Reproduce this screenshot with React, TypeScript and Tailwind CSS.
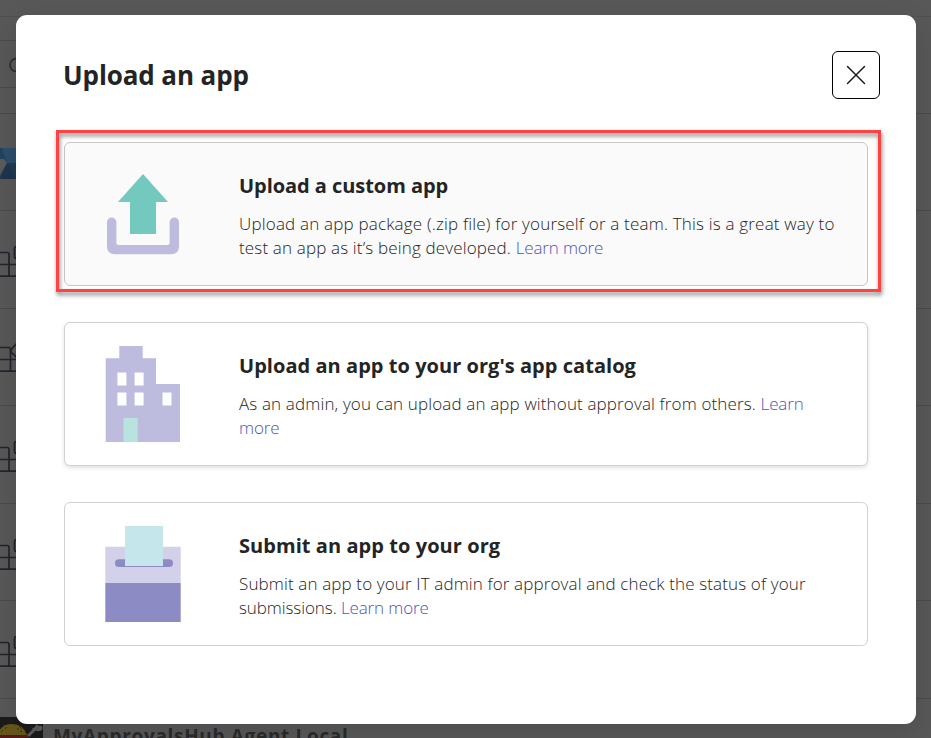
import React from "react";

const font = "font-['Open_Sans','Noto_Sans',sans-serif]";

function AppGlyph({ variant }: { variant: "square" | "diamond" }) {
  const x = variant === "square" ? 9 : 10.5;
  return (
    <svg width="16" height="97" viewBox="0 1 16 97" fill="none" stroke="#23232b" strokeWidth="1.7" className="block">
      <path d={`M0 42.500H${x - 2}Q${x} 42.500 ${x} 44.500V66M0 54.500H16M0 66.200H16`} />
      {variant === "square" ? (
        <path d="M18 36.500H16.500Q14.500 36.500 14.500 38.500V46Q14.500 48.500 16.500 48.500H18" />
      ) : (
        <path d="M18 37L11 44.500Q10.500 46 11.500 47.500L18 53.500" />
      )}
    </svg>
  );
}

function BlueLogo() {
  return (
    <svg width="16" height="97" viewBox="0 1 16 97" className="block">
      <path d="M0 35H16V66H0Z" fill="#24435d" />
      <path d="M2 35H16V50H7Z" fill="#2c4f6c" />
      <path d="M7 50L16 66H0Z" fill="#1d354b" />
      <path d="M7 50H16V66Z" fill="#203b53" />
      <path d="M0 46H4L7 50L0 62Z" fill="#5b5b5b" />
    </svg>
  );
}

function BowlLogo() {
  return (
    <svg width="43" height="21" viewBox="0 0 43 21" className="block shrink-0">
      <path d="M0 0H43V21H0Z" fill="#1b1b1c" />
      <path d="M-3 18Q1 7 12 7Q23 7 27 18Z" fill="#66581a" />
      <path d="M1 15L3 13M5 12L7 10M17 11L19 13M19 9L22 12M20 15L22 14" stroke="#39320f" />
      <path d="M0 18H28V21H0Z" fill="#59191c" />
      <path d="M28 19L36 11" stroke="#5c5c5c" strokeWidth="3" />
      <path d="M31 10Q35 13 36 7L40 10L42 12Q40 16 34 13Z" fill="#5c5c5c" />
      <circle cx="40" cy="11" r="2.500" fill="#5c5c5c" />
    </svg>
  );
}

function Backdrop() {
  return (
    <div className="flex h-full flex-col bg-[#585858]">
      <div className="h-[16px] shrink-0" />
      <div className="h-[24px] shrink-0 border-t border-[#505050]" />
      <div className="flex h-[47px] w-4 shrink-0 items-center border-t border-[#4b4b4b] pl-[9px]">
        <svg width="14" height="16" viewBox="0 0 14 16" fill="none" stroke="#303030" strokeWidth="1.800" className="shrink-0">
          <circle cx="7.500" cy="9" r="6.500" />
        </svg>
      </div>
      <div className="h-[26px] w-4 shrink-0 border-t border-[#4b4b4b]" />
      <div className="h-[97px] shrink-0 border-t border-[#4b4b4b]"><BlueLogo /></div>
      <div className="h-[98px] shrink-0 border-t border-[#4b4b4b]"><AppGlyph variant="square" /></div>
      <div className="h-[97px] shrink-0 border-t border-[#4b4b4b]"><div className="-mt-[3px]"><AppGlyph variant="diamond" /></div></div>
      <div className="h-[98px] shrink-0 border-t border-[#4b4b4b]"><AppGlyph variant="square" /></div>
      <div className="h-[97px] shrink-0 border-t border-[#4b4b4b]"><AppGlyph variant="square" /></div>
      <div className="h-[98px] shrink-0 border-t border-[#4b4b4b]"><AppGlyph variant="square" /></div>
      <div className="flex h-[40px] shrink-0 overflow-hidden border-t border-[#4b4b4b] pt-[18px]">
        <BowlLogo />
        <span className="ml-[10px] mt-[7px] whitespace-nowrap text-[19px] font-bold leading-6 tracking-[0.670px] text-[#2a2a2a]">
          MyApprovalsHub Agent Local
        </span>
      </div>
    </div>
  );
}

function UploadIcon() {
  return (
    <svg width="96" height="96" viewBox="0 0 96 96" className="shrink-0">
      <path d="M48 8L73 36H61V68H35V36H23Z" fill="#74c9bf" />
      <path
        d="M12 56.200A4.700 4.700 0 0 1 21.400 56.200V77Q21.400 79 23.400 79H72.600Q74.600 79 74.600 77V56.200A4.700 4.700 0 0 1 84 56.200V80Q84 88.300 76 88.300H20Q12 88.300 12 80Z"
        fill="#bdbbde"
      />
    </svg>
  );
}

function BuildingIcon() {
  return (
    <svg width="96" height="96" viewBox="0 0 96 96" className="shrink-0">
      <path d="M24.300 0H47.700V12.300H61V38H85V96H10.700V12.300H24.300Z" fill="#bdbbde" />
      <path d="M22.400 26.500h9v13h-9zM39.600 26.500h9v13h-9zM22.400 46.500h9v13h-9zM39.600 46.500h9v13h-9zM67.500 46.500h9v13h-9z" fill="#fff" />
      <path d="M28.500 72H42.700V96H28.500Z" fill="#b9e3df" />
    </svg>
  );
}

function BallotIcon() {
  return (
    <svg width="96" height="96" viewBox="0 0 96 96" className="shrink-0">
      <path d="M10.300 20.700H85.700V57H10.300Z" fill="#d2d1e9" />
      <path d="M10.300 57H85.700V96H10.300Z" fill="#8d8bc4" />
      <rect x="20" y="33.300" width="58" height="7.700" rx="3.850" fill="#8d8bc4" />
      <path d="M30 0H68V40H30Z" fill="#c5e7eb" />
    </svg>
  );
}

function MoreLink({ children }: { children: React.ReactNode }) {
  return <a className="tracking-[-0.14px] text-[#4f52b8]">{children}</a>;
}

type Card = {
  title: string;
  titleClass: string;
  icon: React.ReactNode;
  first: React.ReactNode;
  second: React.ReactNode;
  cardClass: string;
};

const cards: Card[] = [
  {
    title: "Upload a custom app",
    titleClass: "tracking-[-0.05px]",
    icon: <UploadIcon />,
    first: <span className="tracking-[0.185px]">Upload an app package (.zip file) for yourself or a team. This is a great way to</span>,
    second: <><span className="tracking-[0.155px]">test an app as it’s being developed. </span><MoreLink>Learn more</MoreLink></>,
    cardClass: "bg-[#fafafa] border-[#c7c7c7]",
  },
  {
    title: "Upload an app to your org's app catalog",
    titleClass: "tracking-[0.04px]",
    icon: <BuildingIcon />,
    first: <><span className="tracking-[0.14px]">As an admin, you can upload an app without approval from others. </span><MoreLink>Learn</MoreLink></>,
    second: <MoreLink>more</MoreLink>,
    cardClass: "bg-white border-[#d1d1d1] shadow-[0_2px_4px_rgba(0,0,0,0.12)]",
  },
  {
    title: "Submit an app to your org",
    titleClass: "tracking-[0.06px]",
    icon: <BallotIcon />,
    first: <span className="tracking-[0.13px]">Submit an app to your IT admin for approval and check the status of your</span>,
    second: <><span className="tracking-[-0.08px]">submissions. </span><MoreLink>Learn more</MoreLink></>,
    cardClass: "bg-white border-[#d1d1d1]",
  },
];

export default function App() {
  return (
    <div className={`relative h-[738px] w-[931px] overflow-hidden ${font}`}>
      <Backdrop />
      <div className="absolute left-4 top-[15px] flex h-[709px] w-[900px] flex-col rounded-[11px] bg-white px-12 pt-9 shadow-[0_8px_28px_rgba(0,0,0,0.12)]">
        <header className="-mr-3 flex h-12 items-center justify-between">
          <h1 className="-ml-px whitespace-nowrap text-[26px] font-bold leading-8 tracking-[-0.1px] text-[#242424]">Upload an app</h1>
          <button className="flex size-12 items-center justify-center rounded-[6px] border border-black bg-white">
            <svg width="20" height="20" viewBox="0 0 20 20" stroke="#1c1c1c" strokeWidth="1.500" strokeLinecap="round">
              <path d="M1.500 1.500L18.500 18.500M18.500 1.500L1.500 18.500" />
            </svg>
          </button>
        </header>
        <main className="mt-[43px] flex flex-col gap-9">
          {cards.map((card) => (
            <section key={card.title} className={`flex h-36 rounded-[6px] border pl-[30px] pt-[23px] ${card.cardClass}`}>
              {card.icon}
              <div className="ml-12 whitespace-nowrap pt-[6px]">
                <h2 className={`text-[20px] font-bold leading-7 text-[#242424] ${card.titleClass}`}>{card.title}</h2>
                <p className="mt-3 text-[17px] font-light leading-6 text-[#242424]">
                  {card.first}<br />{card.second}
                </p>
              </div>
            </section>
          ))}
        </main>
      </div>
      <div className="pointer-events-none absolute left-[56px] top-[130px] h-[162px] w-[825px] border-[3px] border-[#ff4343] drop-shadow-[1px_3px_2px_rgba(0,0,0,0.5)]" />
    </div>
  );
}
